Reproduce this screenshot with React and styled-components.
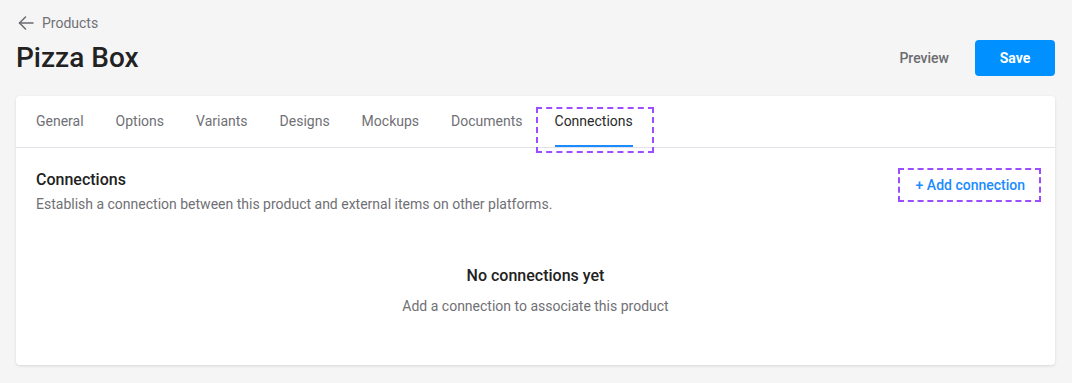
import React from 'react';
import styled, { createGlobalStyle } from 'styled-components';

const GlobalStyle = createGlobalStyle`
    html, body {
        margin: 0;
        padding: 0;
        background: #f5f5f5;
        font-family: Roboto, "Liberation Sans", Arial, sans-serif;
        color: #222;
    }
    * { box-sizing: border-box; }
`;

const Page = styled.div`
    padding: 14px 17px 18px 16px;
`;

const Breadcrumb = styled.a`
    display: inline-flex;
    align-items: center;
    gap: 8px;
    font-size: 14px;
    color: #707075;
    text-decoration: none;
    margin-left: 2px;
    height: 18px;
`;

const Header = styled.div`
    display: flex;
    align-items: center;
    justify-content: space-between;
    margin-top: 5px;
    margin-bottom: 20px;
`;

const Title = styled.h1`
    margin: 0;
    font-size: 28px;
    font-weight: 500;
    color: #222;
    line-height: 36px;
`;

const Actions = styled.div`
    display: flex;
    align-items: center;
    gap: 10px;
`;

const GhostButton = styled.button`
    border: none;
    background: transparent;
    font: inherit;
    font-size: 14px;
    font-weight: 500;
    color: #6b6b70;
    padding: 0 16px;
    height: 36px;
    cursor: pointer;
`;

const PrimaryButton = styled.button`
    border: none;
    background: #0090ff;
    color: #fff;
    font: inherit;
    font-size: 14px;
    font-weight: 700;
    width: 80px;
    height: 36px;
    border-radius: 4px;
    cursor: pointer;
`;

const Card = styled.section`
    background: #fff;
    border-radius: 4px;
    box-shadow: 0 1px 3px rgba(0, 0, 0, .12);
`;

const TabBar = styled.nav`
    display: flex;
    gap: 32px;
    height: 52px;
    padding: 0 20px;
    border-bottom: 1px solid #e2e2e8;
`;

const Tab = styled.div`
    position: relative;
    display: flex;
    align-items: center;
    padding-bottom: 1px;
    font-size: 14px;
    color: ${p => p.$active ? '#2a2a2a' : '#707075'};
    &::after {
        content: '';
        display: ${p => p.$active ? 'block' : 'none'};
        position: absolute;
        left: 0;
        right: 0;
        bottom: 0;
        height: 2px;
        background: #1a8cff;
    }
    &::before {
        content: '';
        display: ${p => p.$outlined ? 'block' : 'none'};
        position: absolute;
        top: 11px;
        bottom: -6px;
        left: -19px;
        right: -21px;
        border: 2px dashed #9b4dff;
    }
`;

const Body = styled.div`
    padding: 22px 20px 0 20px;
`;

const SectionHead = styled.div`
    display: flex;
    justify-content: space-between;
    align-items: flex-start;
`;

const SectionTitle = styled.h2`
    margin: 0 0 7px;
    font-size: 16px;
    font-weight: 500;
    color: #222;
`;

const SectionText = styled.p`
    margin: 0;
    font-size: 14px;
    color: #707075;
`;

const LinkButton = styled.button`
    background: transparent;
    border: 2px dashed #9b4dff;
    font: inherit;
    font-size: 14px;
    font-weight: 500;
    color: #1a8cff;
    height: 34px;
    padding: 0 14px 0 16px;
    margin-top: -2px;
    margin-right: -6px;
    cursor: pointer;
`;

const Empty = styled.div`
    display: flex;
    flex-direction: column;
    align-items: center;
    padding: 54px 0 51px;
`;

const EmptyTitle = styled.h3`
    margin: 0 0 13px;
    font-size: 16px;
    font-weight: 500;
    color: #222;
`;

const EmptyText = styled.p`
    margin: 0;
    font-size: 14px;
    color: #707075;
`;

const ArrowLeft = () => (
    <svg width="16" height="16" viewBox="0 0 16 16" fill="none" stroke="#6b6b70" strokeWidth="1.5" strokeLinecap="round" strokeLinejoin="round">
        <path d="M15 8H1.5" />
        <path d="M7.5 2L1.5 8l6 6" />
    </svg>
);

const tabs = ['General', 'Options', 'Variants', 'Designs', 'Mockups', 'Documents', 'Connections'];

export default function App() {
    return (
        <>
            <GlobalStyle />
            <Page>
                <Breadcrumb href="#"><ArrowLeft />Products</Breadcrumb>
                <Header>
                    <Title>Pizza Box</Title>
                    <Actions>
                        <GhostButton>Preview</GhostButton>
                        <PrimaryButton>Save</PrimaryButton>
                    </Actions>
                </Header>
                <Card>
                    <TabBar>
                        {tabs.map(t => (
                            <Tab key={t} $active={t === 'Connections'} $outlined={t === 'Connections'}>{t}</Tab>
                        ))}
                    </TabBar>
                    <Body>
                        <SectionHead>
                            <div>
                                <SectionTitle>Connections</SectionTitle>
                                <SectionText>Establish a connection between this product and external items on other platforms.</SectionText>
                            </div>
                            <LinkButton>+ Add connection</LinkButton>
                        </SectionHead>
                        <Empty>
                            <EmptyTitle>No connections yet</EmptyTitle>
                            <EmptyText>Add a connection to associate this product</EmptyText>
                        </Empty>
                    </Body>
                </Card>
            </Page>
        </>
    );
}
